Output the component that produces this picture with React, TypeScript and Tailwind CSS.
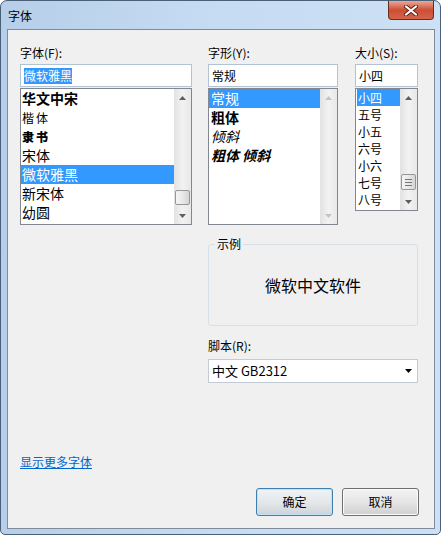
import React from 'react';

const fontRows = [
  { name: '华文中宋', cls: 'text-[14px] font-bold' },
  { name: '楷体', cls: 'text-[12px] text-[#222] tracking-[2px]' },
  { name: '隶书', cls: 'text-[12px] font-black tracking-[2px]' },
  { name: '宋体', cls: 'text-[14px]' },
  { name: '微软雅黑', cls: 'text-[14px]', selected: true },
  { name: '新宋体', cls: 'text-[14px]' },
  { name: '幼圆', cls: 'text-[14px]' },
];

const styleRows = [
  { name: '常规', cls: '', selected: true },
  { name: '粗体', cls: 'font-bold' },
  { name: '倾斜', cls: 'italic' },
  { name: '粗体 倾斜', cls: 'font-bold italic' },
];

const sizeRows = ['小四', '五号', '小五', '六号', '小六', '七号', '八号'];

function Arrow({ up, color }: { up?: boolean; color: string }) {
  return (
    <svg width="7" height="4" viewBox="0 0 7 4">
      <polygon points={up ? '0,4 3.5,0 7,4' : '0,0 7,0 3.5,4'} fill={color} />
    </svg>
  );
}

function ScrollBar({
  thumbCls,
  disabled,
  grip,
}: {
  thumbCls?: string;
  disabled?: boolean;
  grip?: boolean;
}) {
  const color = disabled ? '#c4c4c4' : '#5f5f5f';
  return (
    <div className="flex w-[17px] shrink-0 flex-col bg-linear-to-r from-[#e2e2e2] via-[#f2f2f2] to-[#e8e8e8]">
      <div className="flex h-[17px] items-center justify-center">
        <Arrow up color={color} />
      </div>
      <div className="flex flex-1 flex-col">
        {thumbCls && (
          <div
            className={`${thumbCls} mx-[1px] flex flex-col items-center justify-center gap-[2px] rounded-[2px] border border-[#979797] bg-linear-to-r from-[#f5f5f5] via-[#e9e9e9] to-[#d5d5d5]`}
          >
            {grip && (
              <>
                <div className="h-px w-[7px] bg-[#777]" />
                <div className="h-px w-[7px] bg-[#777]" />
                <div className="h-px w-[7px] bg-[#777]" />
              </>
            )}
          </div>
        )}
      </div>
      <div className="flex h-[17px] items-center justify-center">
        <Arrow color={color} />
      </div>
    </div>
  );
}

function Label({ children }: { children: React.ReactNode }) {
  return <div className="h-[16px] text-[12px] leading-[16px] text-black">{children}</div>;
}

function TextBox({ children }: { children: React.ReactNode }) {
  return (
    <div className="mt-[3px] flex h-[23px] items-center border border-[#b4c3d3] bg-white pl-[3px] text-[12px] leading-[16px]">
      {children}
    </div>
  );
}

export default function App() {
  return (
    <div className="flex h-[535px] w-[441px] flex-col rounded-t-[7px] rounded-b-[5px] border border-[#4a5f78] bg-linear-to-r from-[#b6cee8] via-[#c6dcf3] to-[#cde0f4] font-['Noto_Sans_CJK_SC','Noto_Sans',sans-serif] text-black">
      {/* title bar */}
      <div className="flex h-[28px] shrink-0 items-start justify-between">
        <div className="ml-[7px] mt-[7px] text-[12px] leading-[16px] text-black">字体</div>
        <div className="mr-[6px] flex h-[19px] w-[46px] items-center justify-center rounded-b-[4px] border border-t-0 border-[#6b2b20] bg-linear-to-b from-[#e9a796] via-[#cc4d33] to-[#d5644a]">
          <svg width="14" height="11" viewBox="0 0 14 11">
            <path d="M2 1.5 L12 9.5 M12 1.5 L2 9.5" stroke="#5a2218" strokeWidth="4" strokeLinecap="round" />
            <path d="M2 1.5 L12 9.5 M12 1.5 L2 9.5" stroke="#ffffff" strokeWidth="2.2" strokeLinecap="round" />
          </svg>
        </div>
      </div>

      {/* client area */}
      <div className="mb-[5px] ml-[6px] mr-[5px] flex flex-1 flex-col border border-[#7d8b9a] bg-[#f0f0f0] pl-[12px] pr-[15px] pt-[15px]">
        <div className="flex items-start">
          {/* font family */}
          <div className="mr-[16px] w-[172px]">
            <Label>字体(F):</Label>
            <TextBox>
              <span className="flex h-[16px] items-center bg-[#3399ff] text-white">微软雅黑</span>
            </TextBox>
            <div className="mt-[1px] flex h-[137px] border border-[#828790] bg-white">
              <div className="flex-1">
                {fontRows.map((r) => (
                  <div
                    key={r.name}
                    className={`flex h-[19px] items-center pl-[1px] leading-[19px] ${
                      r.selected ? 'bg-[#3399ff] text-white' : 'text-black'
                    } ${r.cls}`}
                  >
                    {r.name}
                  </div>
                ))}
              </div>
              <ScrollBar thumbCls="mt-[84px] h-[15px]" />
            </div>
          </div>

          {/* style */}
          <div className="mr-[17px] w-[130px]">
            <Label>字形(Y):</Label>
            <TextBox>常规</TextBox>
            <div className="mt-[1px] flex h-[137px] border border-[#828790] bg-white">
              <div className="flex-1">
                {styleRows.map((r) => (
                  <div
                    key={r.name}
                    className={`flex h-[19px] items-center pl-[2px] text-[14px] leading-[19px] ${
                      r.selected ? 'bg-[#3399ff] text-white' : 'text-black'
                    } ${r.cls}`}
                  >
                    {r.name}
                  </div>
                ))}
              </div>
              <ScrollBar disabled />
            </div>
          </div>

          {/* size */}
          <div className="w-[63px]">
            <Label>大小(S):</Label>
            <TextBox>小四</TextBox>
            <div className="mt-[1px] flex h-[123px] border border-[#828790] bg-white">
              <div className="flex-1 pl-[1px]">
                {sizeRows.map((s, i) => (
                  <div
                    key={s}
                    className={`flex h-[17px] items-center pl-[1px] text-[12px] leading-[15px] ${
                      i === 0 ? 'bg-[#3399ff] text-white' : 'text-black'
                    }`}
                  >
                    {s}
                  </div>
                ))}
              </div>
              <ScrollBar thumbCls="mt-[68px] h-[16px]" grip />
            </div>
          </div>
        </div>

        {/* sample + script */}
        <div className="ml-[188px] w-[210px]">
          <div className="relative mt-[19px] flex h-[82px] justify-center rounded-[3px] border border-[#d5dfe5] pt-[30px]">
            <span className="absolute -top-[9px] left-[6px] bg-[#f0f0f0] px-[2px] text-[12px] leading-[16px]">
              示例
            </span>
            <span className="text-[16px] leading-[20px]">微软中文软件</span>
          </div>
          <div className="mt-[12px]">
            <Label>脚本(R):</Label>
          </div>
          <div className="mt-[5px] flex h-[24px] items-center justify-between border border-[#c3ccd6] bg-white pl-[3px] pr-[5px] text-[13px]">
            <span>中文 GB2312</span>
            <Arrow color="#000000" />
          </div>
        </div>

        <div className="mt-[71px] h-[16px] text-[12px] leading-[16px]">
          <span className="text-[#0066cc] underline">显示更多字体</span>
        </div>

        <div className="mt-[18px] flex justify-end gap-[9px]">
          <button className="h-[28px] w-[77px] rounded-[3px] border border-[#3c7fb1] bg-linear-to-b from-[#f0f3f5] via-[#e4e8eb] to-[#cdd3d8] text-[12px] shadow-[inset_0_0_0_1px_#bfe3f7]">
            确定
          </button>
          <button className="h-[28px] w-[77px] rounded-[3px] border border-[#707070] bg-linear-to-b from-[#f2f2f2] via-[#e6e6e6] to-[#cfcfcf] text-[12px] shadow-[inset_0_0_0_1px_#fbfbfb]">
            取消
          </button>
        </div>
      </div>
    </div>
  );
}
